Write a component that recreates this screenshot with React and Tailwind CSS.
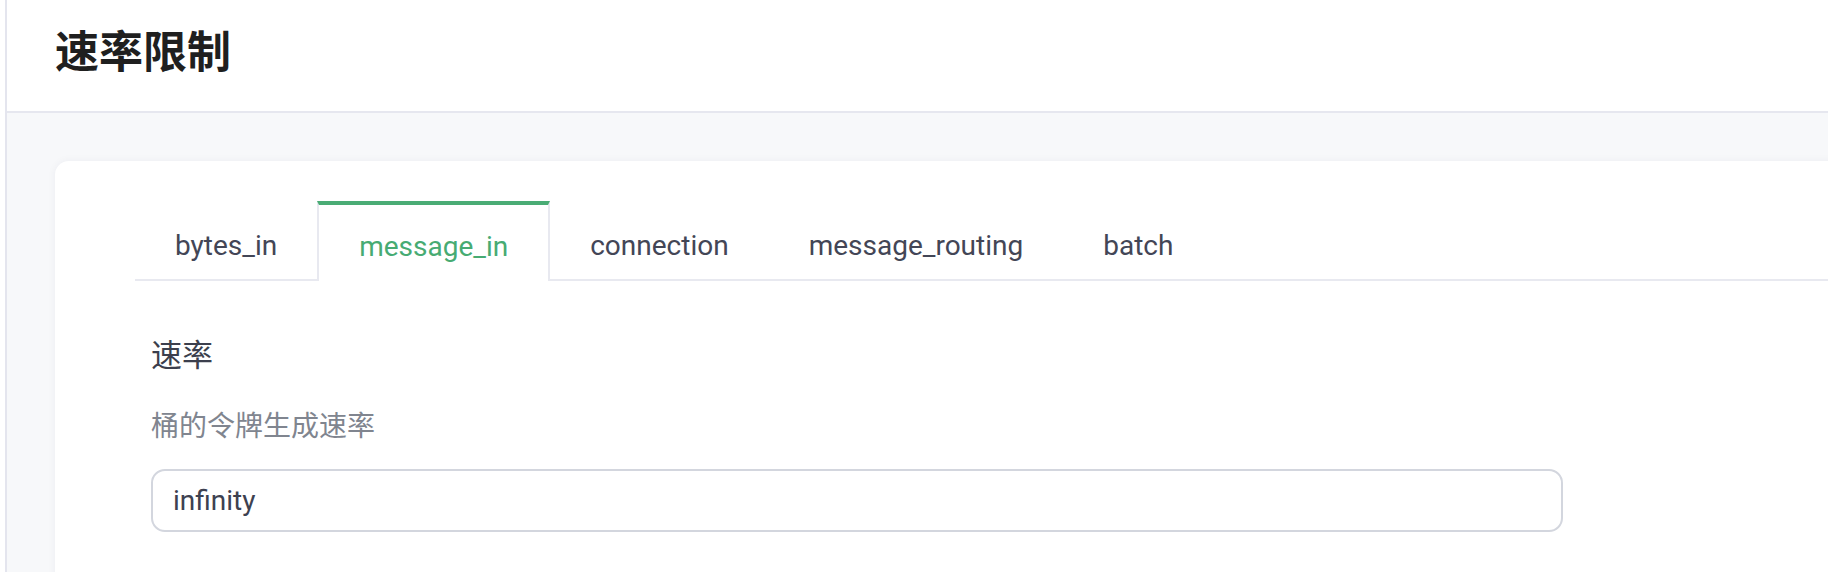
import React, { useState } from "react";

const tabs = ["bytes_in", "message_in", "connection", "message_routing", "batch"];

const RateLimit = () => {
  const [active, setActive] = useState("message_in");
  const [rate, setRate] = useState("infinity");

  return (
    <div className="h-[572px] w-[1828px] overflow-hidden bg-white flex font-['Roboto','Noto_Sans_CJK_SC',sans-serif]">
      <div className="w-[5px] shrink-0 bg-white" />
      <div className="flex-1 min-w-0 border-l-2 border-[#e4e5ee] flex flex-col">
        {/* page header */}
        <div className="h-[113px] shrink-0 bg-white border-b-2 border-[#e6e7ef] pl-[48px] pt-[27px]">
          <h1 className="text-[44px] leading-none font-bold text-[#1f1f1f] font-['Noto_Sans_CJK_SC',sans-serif]">
            速率限制
          </h1>
        </div>

        {/* main */}
        <div className="flex-1 bg-[#f7f8fa] pt-[48px] pl-[48px] overflow-hidden">
          <div className="w-[1850px] h-[600px] bg-white rounded-[14px] shadow-[0_0_8px_rgba(30,40,80,0.05)] pt-[40px] pl-[80px]">
            <div className="flex border-b-2 border-[#e8e9f0]">
              {tabs.map((t) => {
                const isActive = t === active;
                return (
                  <button
                    key={t}
                    onClick={() => setActive(t)}
                    className={
                      isActive
                        ? "h-[80px] -mb-[2px] px-[40px] pt-[7px] bg-white border-t-4 border-x-2 border-t-[#4aac75] border-x-[#e8e9f0] text-[28px] text-[#47ab73] leading-none"
                        : "h-[78px] px-[40px] pt-[11px] text-[28px] text-[#434656] leading-none"
                    }
                  >
                    {t}
                  </button>
                );
              })}
            </div>

            <div className="pl-[16px] pt-[56px]">
              <div className="text-[31px] leading-none text-[#3c3f4d] font-['Noto_Sans_CJK_SC',sans-serif]">
                速率
              </div>
              <div className="mt-[42px] text-[28px] leading-none text-[#80858f] font-['Noto_Sans_CJK_SC',sans-serif]">
                桶的令牌生成速率
              </div>
              <input
                type="text"
                value={rate}
                onChange={(e) => setRate(e.target.value)}
                className="mt-[31px] block w-[1412px] h-[63px] px-[20px] border-2 border-[#d3d6de] rounded-[14px] text-[28px] text-[#3d4150] outline-none font-['Roboto',sans-serif]"
              />
            </div>
          </div>
        </div>
      </div>
    </div>
  );
};

export default RateLimit;
